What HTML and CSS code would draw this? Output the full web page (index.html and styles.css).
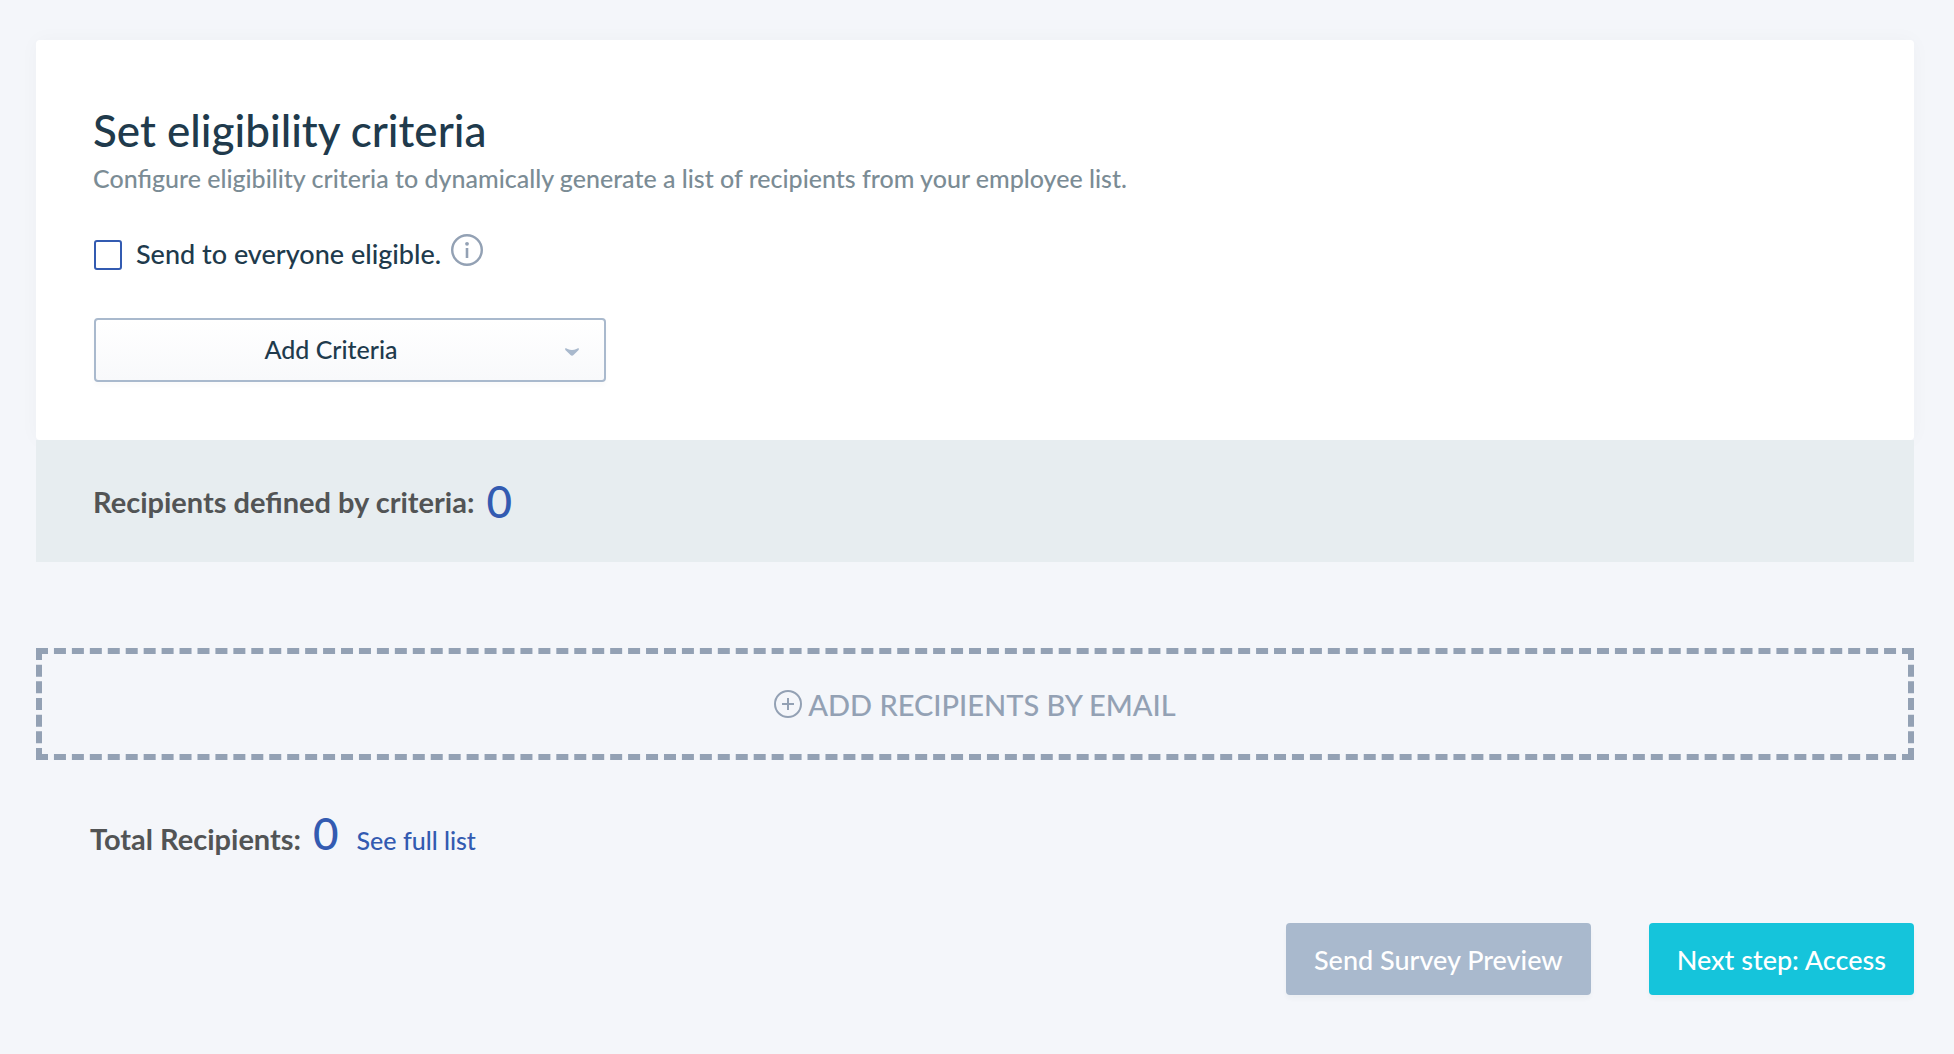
FILE: index.html
```html
<!DOCTYPE html>
<html lang="en">
<head>
    <meta charset="UTF-8">
    <meta name="viewport" content="width=device-width, initial-scale=1.0">
    <title>Set eligibility criteria</title>
    <link rel="stylesheet" href="styles.css">
</head>
<body>
<main class="page">
    <section class="card">
        <h1>Set eligibility criteria</h1>
        <p class="subtitle">Configure eligibility criteria to dynamically generate a list of recipients from your employee list.</p>

        <div class="everyone">
            <input type="checkbox" id="everyone">
            <label for="everyone">Send to everyone eligible.</label>
            <svg class="info-icon" viewBox="0 0 32 32" role="img" aria-label="More information">
                <circle cx="16" cy="16" r="14.8" fill="none" stroke="currentColor" stroke-width="2.4"/>
                <circle cx="16" cy="9.8" r="1.9" fill="currentColor"/>
                <path d="M16 14v10" stroke="currentColor" stroke-width="2.6"/>
            </svg>
        </div>

        <div class="criteria">
            <select id="criteria" aria-label="Add Criteria">
                <option>Add Criteria</option>
            </select>
            <svg class="chevron" viewBox="0 0 14 8" aria-hidden="true">
                <path d="M0 0.5Q1.2 -0.2 2.6 1Q7 3.2 11.4 1Q12.8 -0.2 14 0.5Q14 2 12.6 3L8.5 7Q7 8.4 5.5 7L1.4 3Q0 2 0 0.5Z" fill="currentColor"/>
            </svg>
        </div>
    </section>

    <div class="criteria-count">
        <span class="count-label">Recipients defined by criteria:</span>
        <span class="count">0</span>
    </div>

    <button type="button" class="add-email">
        <svg class="plus-icon" viewBox="0 0 28 28" aria-hidden="true">
            <circle cx="14" cy="14" r="13" fill="none" stroke="currentColor" stroke-width="2"/>
            <path d="M14 8v12M8 14h12" stroke="currentColor" stroke-width="2"/>
        </svg>
        ADD RECIPIENTS BY EMAIL
    </button>

    <div class="total">
        <span class="count-label">Total Recipients:</span>
        <span class="count">0</span>
        <a href="#">See full list</a>
    </div>

    <div class="actions">
        <button type="button" class="btn btn-preview">Send Survey Preview</button>
        <button type="button" class="btn btn-next">Next step: Access</button>
    </div>
</main>
</body>
</html>
```
FILE: styles.css
```css
:root {
    --background-color: #f4f6fa;
    --text-color: #203a4c;
    --muted-color: #7b8c95;
    --slate: #93a1b4;
    --border-color: #a9b9cd;
    --blue: #335bb1;
    --cyan: #15c4db;
}
* {
    box-sizing: border-box;
}
body {
    margin: 0;
    background-color: var(--background-color);
    color: var(--text-color);
    font-family: Lato, "Liberation Sans", sans-serif;
    font-weight: 500;
}
.page {
    padding: 40px 40px 58px 36px;
}
.card {
    padding: 62px 58px 58px 57px;
    background-color: #fff;
    border-radius: 4px;
    box-shadow: 0 0 20px rgba(32, 58, 76, 0.03);
}
h1 {
    margin: 0;
    font-size: 44px;
    font-weight: 500;
    line-height: 56px;
}
.subtitle {
    margin: 0;
    color: var(--muted-color);
    font-size: 25px;
    line-height: 40px;
}
.everyone {
    display: flex;
    margin-top: 36px;
    height: 40px;
    font-size: 27px;
    line-height: 40px;
}
.everyone input {
    appearance: none;
    width: 28px;
    height: 30px;
    margin: 6px 14px 0 1px;
    border: 2px solid var(--blue);
    border-radius: 3px;
    background-color: #fff;
}
.info-icon {
    width: 32px;
    height: 32px;
    margin-left: 10px;
    color: var(--slate);
}
.criteria {
    position: relative;
    max-width: 512px;
    margin: 44px 0 0 1px;
}
.criteria select {
    appearance: none;
    display: block;
    width: 100%;
    height: 64px;
    padding: 0 46px 2px 8px;
    border: 2px solid var(--border-color);
    border-radius: 4px;
    background: linear-gradient(#fff, #f8f9fb);
    box-shadow: 0 4px 4px rgba(32, 58, 76, 0.02);
    color: var(--text-color);
    font: inherit;
    font-size: 25px;
    text-align: center;
    text-align-last: center;
    cursor: pointer;
}
.chevron {
    position: absolute;
    top: 30px;
    right: 27px;
    width: 14px;
    height: 8px;
    color: var(--border-color);
    pointer-events: none;
}
.criteria-count {
    display: flex;
    align-items: center;
    height: 122px;
    padding: 0 57px;
    background-color: #e7edf0;
}
.count-label {
    color: #525455;
    font-size: 29px;
    font-weight: 700;
}
.count {
    margin-left: 12px;
    color: var(--blue);
    font-size: 44px;
}
.add-email {
    display: flex;
    justify-content: center;
    align-items: center;
    gap: 6px;
    width: 100%;
    height: 112px;
    margin-top: 86px;
    border: 6px dashed var(--slate);
    background: none;
    color: var(--slate);
    font: inherit;
    font-size: 29px;
    cursor: pointer;
}
.plus-icon {
    width: 28px;
    height: 28px;
}
.total {
    display: flex;
    align-items: baseline;
    margin-top: 47px;
    padding: 0 54px;
}
.total a {
    margin-left: 18px;
    color: var(--blue);
    font-size: 25px;
    text-decoration: none;
}
.actions {
    display: flex;
    justify-content: flex-end;
    flex-wrap: wrap;
    gap: 58px;
    margin-top: 64px;
}
.btn {
    height: 72px;
    padding: 0 28px;
    border: 0;
    border-radius: 4px;
    box-shadow: 0 4px 4px rgba(32, 58, 76, 0.03);
    color: #fff;
    font: inherit;
    font-size: 27px;
    cursor: pointer;
}
.btn-preview {
    background-color: var(--border-color);
}
.btn-next {
    background-color: var(--cyan);
}
```
